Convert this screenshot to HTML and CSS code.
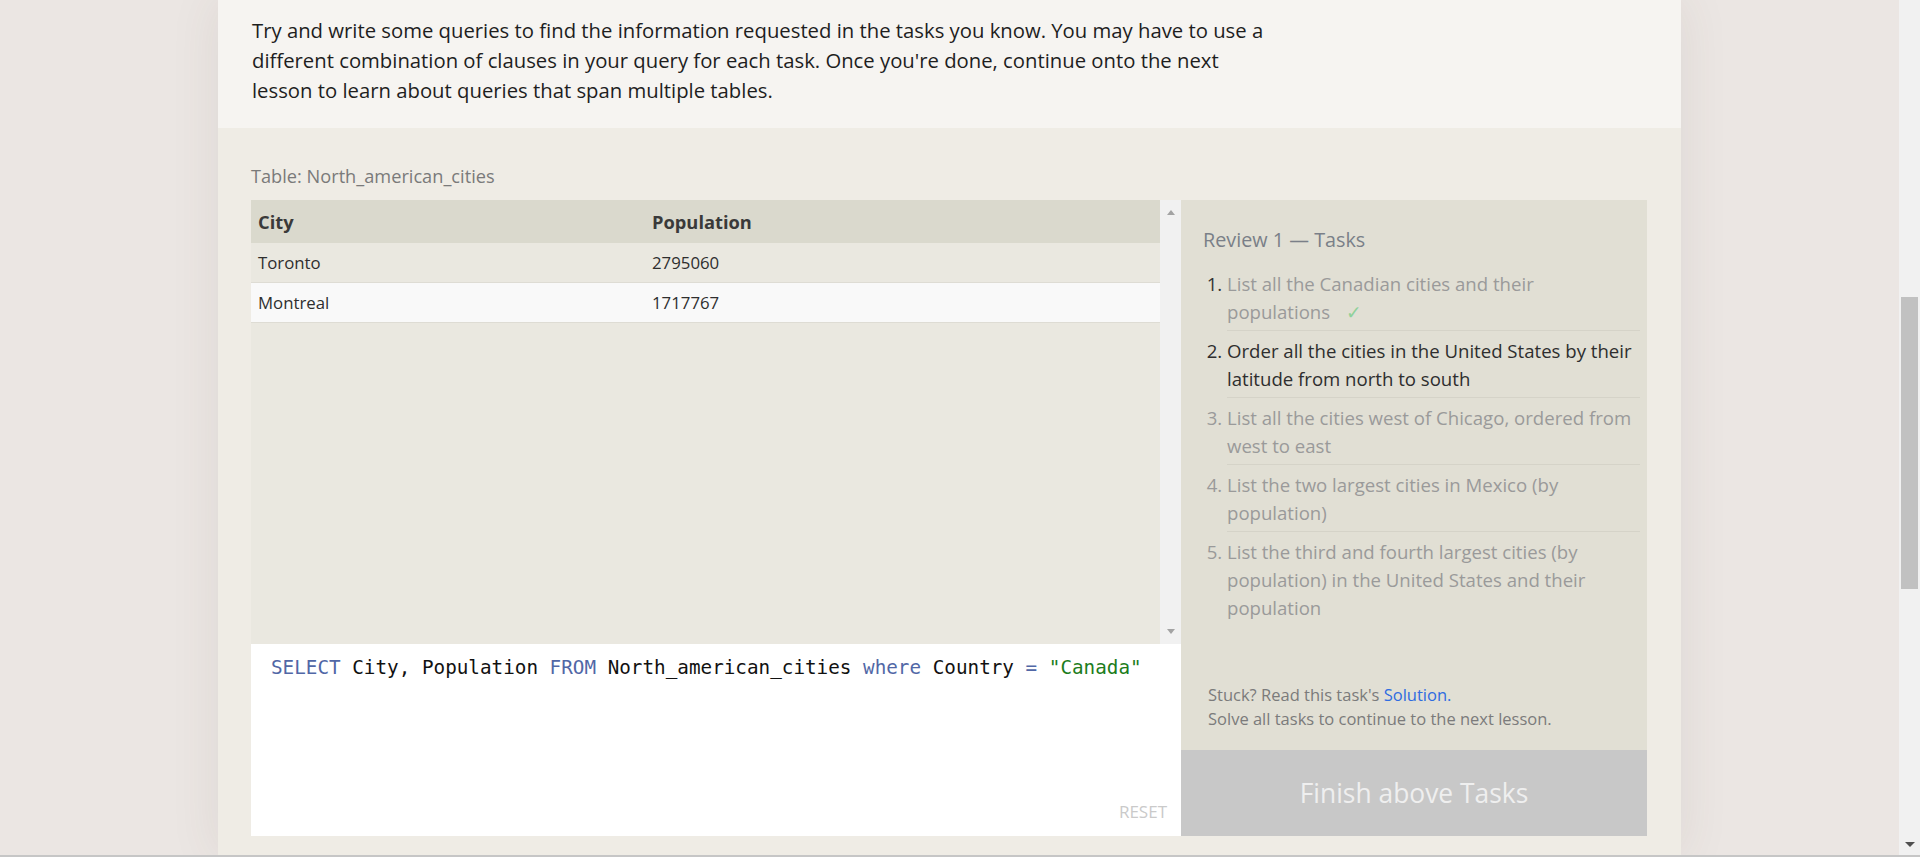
FILE: index.html
```html
<!DOCTYPE html>
<html lang="en">
<head>
<meta charset="utf-8">
<title>SQLBolt - Review 1</title>
<link rel="stylesheet" href="styles.css">
</head>
<body>
<div class="window">
  <div class="page">
    <div class="column">
      <section class="intro">
        <p>Try and write some queries to find the information requested in the tasks you know. You may have to use a different combination of clauses in your query for each task. Once you're done, continue onto the next lesson to learn about queries that span multiple tables.</p>
      </section>
      <section class="exercise">
        <div class="table-label">Table: North_american_cities</div>
        <div class="workspace">
          <div class="left">
            <div class="results">
              <div class="results-table">
                <table>
                  <thead>
                    <tr><th class="col-city">City</th><th>Population</th></tr>
                  </thead>
                  <tbody>
                    <tr class="odd"><td>Toronto</td><td>2795060</td></tr>
                    <tr class="even"><td>Montreal</td><td>1717767</td></tr>
                  </tbody>
                </table>
              </div>
              <div class="inner-scroll">
                <span class="arrow-up"></span>
                <span class="arrow-down"></span>
              </div>
            </div>
            <div class="editor">
              <div class="code"><span class="kw">SELECT</span> City, Population <span class="kw">FROM</span> North_american_cities <span class="kw">where</span> Country <span class="kw">=</span> <span class="str">"Canada"</span></div>
              <div class="reset">RESET</div>
            </div>
          </div>
          <div class="right">
            <div class="tasks">
              <h3 class="tasks-title">Review 1 — Tasks</h3>
              <ol class="task-list">
                <li class="done">List all the Canadian cities and their <span class="nowrap">populations <span class="check">✓</span></span></li>
                <li class="current">Order all the cities in the United States by their latitude from north to south</li>
                <li class="todo">List all the cities west of Chicago, ordered from west to east</li>
                <li class="todo">List the two largest cities in Mexico (by population)</li>
                <li class="todo last">List the third and fourth largest cities (by population) in the United States and their population</li>
              </ol>
              <div class="stuck">
                <div>Stuck? Read this task's <a class="solution" href="#">Solution.</a></div>
                <div>Solve all tasks to continue to the next lesson.</div>
              </div>
            </div>
            <div class="finish">Finish above Tasks</div>
          </div>
        </div>
      </section>
    </div>
  </div>
  <div class="page-scroll">
    <div class="thumb"></div>
    <span class="page-arrow-down"></span>
  </div>
</div>
<div class="bottom-line"></div>
</body>
</html>
```

FILE: styles.css
```css
html, body {
  margin: 0;
  padding: 0;
}

body {
  width: 1920px;
  height: 857px;
  overflow: hidden;
  display: flex;
  flex-direction: column;
  font-family: "Open Sans", "Noto Sans", "DejaVu Sans", sans-serif;
  background: #ebe6e3;
}

.window {
  flex: 1;
  display: flex;
  min-height: 0;
}

.bottom-line {
  height: 2px;
  background: #c6c6c6;
}

.page {
  flex: 1;
  display: flex;
  justify-content: center;
  background: #ebe6e3;
  overflow: hidden;
}

.column {
  width: 1463px;
  display: flex;
  flex-direction: column;
  box-shadow: 0 0 48px rgba(90, 70, 60, 0.09);
}

.intro {
  background: #f6f4f1;
  height: 128px;
  box-sizing: border-box;
  padding: 15px 34px 0 34px;
}

.intro p {
  margin: 0;
  max-width: 1028px;
  font-size: 20.3px;
  line-height: 30px;
  color: #1e1e1e;
}

.exercise {
  flex: 1;
  background: #efece5;
  padding: 36px 34px 0 33px;
}

.table-label {
  font-size: 18.2px;
  line-height: 24px;
  color: #7a7a7a;
  margin-bottom: 12px;
}

.workspace {
  display: flex;
}

.left {
  width: 930px;
  display: flex;
  flex-direction: column;
}

.results {
  height: 444px;
  display: flex;
  background: #eae8e0;
}

.results-table {
  flex: 1;
}

table {
  width: 100%;
  border-collapse: collapse;
}

th {
  text-align: left;
  background: #dad9cd;
  height: 43px;
  padding: 0 7px;
  font-size: 18.3px;
  font-weight: 700;
  color: #3a3a3a;
}

.col-city {
  width: 380px;
}

td {
  height: 39px;
  padding: 0 7px;
  font-size: 16.8px;
  color: #2e2e2e;
  border-bottom: 1px solid #dedcd4;
}

tr.odd td {
  background: #eae8e0;
}

tr.even td {
  background: #f9f9f9;
}

.inner-scroll {
  width: 21px;
  background: #f1f1f1;
  display: flex;
  flex-direction: column;
  justify-content: space-between;
  align-items: center;
  padding: 10px 0 10px;
  box-sizing: border-box;
}

.arrow-up {
  width: 0;
  height: 0;
  border-left: 4.5px solid transparent;
  border-right: 4.5px solid transparent;
  border-bottom: 5px solid #a3a3a3;
}

.arrow-down {
  width: 0;
  height: 0;
  border-left: 4.5px solid transparent;
  border-right: 4.5px solid transparent;
  border-top: 5px solid #a3a3a3;
}

.editor {
  height: 192px;
  background: #ffffff;
  display: flex;
  flex-direction: column;
  box-sizing: border-box;
  padding: 12px 14px 14px 20px;
}

.code {
  flex: 1;
  font-family: "DejaVu Sans Mono", "Liberation Mono", monospace;
  font-size: 19.3px;
  line-height: 24px;
  color: #111111;
  white-space: pre;
}

.kw {
  color: #5167a6;
}

.str {
  color: #1c7d1c;
}

.reset {
  align-self: flex-end;
  font-size: 17px;
  line-height: 20px;
  color: #cacaca;
}

.right {
  width: 466px;
  display: flex;
  flex-direction: column;
}

.tasks {
  height: 550px;
  background: #e1dfd4;
  box-sizing: border-box;
  padding: 28px 7px 19px 22px;
  display: flex;
  flex-direction: column;
}

.tasks-title {
  margin: 0;
  font-size: 19.8px;
  font-weight: 400;
  line-height: 24px;
  color: #7a7f88;
}

.task-list {
  margin: 12px 0 0 0;
  padding: 0 0 0 24px;
  font-size: 18.6px;
  line-height: 28px;
}

.task-list li {
  padding: 6px 0 4px 0;
  border-bottom: 1px solid #d5d3c8;
  color: #9a9a9a;
}

.task-list li.last {
  border-bottom: none;
}

.task-list li.done::marker {
  color: #333333;
}

.task-list li.current {
  color: #2e2e2e;
}

.nowrap {
  white-space: nowrap;
}

.check {
  color: #8fd19a;
  margin-left: 11px;
}

.stuck {
  margin-top: auto;
  padding-left: 5px;
  font-size: 16.5px;
  line-height: 24px;
  color: #7b7b7b;
}

.solution {
  color: #2f6ce0;
  text-decoration: none;
}

.finish {
  height: 86px;
  background: #c8c8c8;
  color: #efefef;
  font-size: 26.4px;
  display: flex;
  align-items: center;
  justify-content: center;
}

.page-scroll {
  width: 21px;
  background: #f1f1f1;
  display: flex;
  flex-direction: column;
  align-items: center;
  padding-top: 297px;
  padding-bottom: 8px;
  box-sizing: border-box;
}

.thumb {
  width: 17px;
  height: 292px;
  background: #c1c1c1;
}

.page-arrow-down {
  margin-top: auto;
  width: 0;
  height: 0;
  border-left: 5px solid transparent;
  border-right: 5px solid transparent;
  border-top: 5px solid #505050;
}
```
